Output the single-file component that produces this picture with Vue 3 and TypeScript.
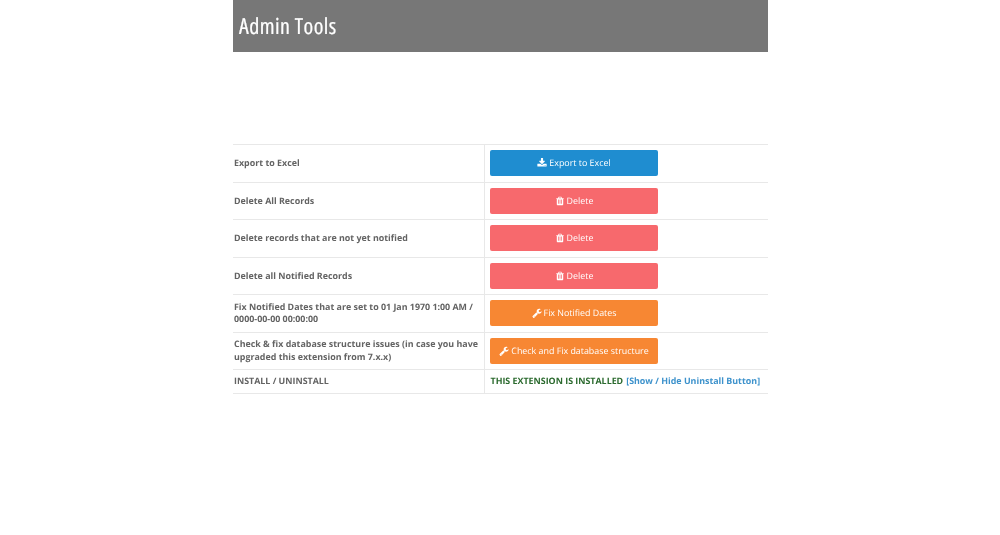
<script setup lang="ts">
type Row = { label: string; text: string; kind: string; icon: string }
const icons: Record<string, string> = {
  download: 'M1344 1344q0-26-19-45t-45-19-45 19-19 45 19 45 45 19 45-19 19-45zm256 0q0-26-19-45t-45-19-45 19-19 45 19 45 45 19 45-19 19-45zm128-224v320q0 40-28 68t-68 28h-1472q-40 0-68-28t-28-68v-320q0-40 28-68t68-28h465l135 136q58 56 136 56t136-56l136-136h464q40 0 68 28t28 68zm-325-569q17 41-14 70l-448 448q-18 19-45 19t-45-19l-448-448q-31-29-14-70 17-39 59-39h256v-448q0-26 19-45t45-19h256q26 0 45 19t19 45v448h256q42 0 59 39z',
  trash: 'M704 1376v-704q0-14-9-23t-23-9h-64q-14 0-23 9t-9 23v704q0 14 9 23t23 9h64q14 0 23-9t9-23zm256 0v-704q0-14-9-23t-23-9h-64q-14 0-23 9t-9 23v704q0 14 9 23t23 9h64q14 0 23-9t9-23zm256 0v-704q0-14-9-23t-23-9h-64q-14 0-23 9t-9 23v704q0 14 9 23t23 9h64q14 0 23-9t9-23zm-544-992h448l-48-117q-7-9-17-11h-317q-10 2-17 11zm928 32v64q0 14-9 23t-23 9h-96v948q0 83-47 143.5t-113 60.5h-832q-66 0-113-58.5t-47-141.5v-952h-96q-14 0-23-9t-9-23v-64q0-14 9-23t23-9h309l70-167q15-37 54-63t79-26h320q40 0 79 26t54 63l70 167h309q14 0 23 9t9 23z',
  wrench: 'M448 1472q0-26-19-45t-45-19-45 19-19 45 19 45 45 19 45-19 19-45zm644-420l-682 682q-37 37-90 37-52 0-91-37l-106-108q-38-36-38-90 0-53 38-91l681-681q39 98 114.5 173.5t173.5 114.5zm634-435q0 39-23 106-47 134-164.5 217.5t-258.5 83.5q-185 0-316.5-131.5t-131.5-316.5 131.5-316.5 316.5-131.5q58 0 121.5 16.5t107.5 46.5q16 11 16 28t-16 28l-293 169v224l193 107q5-3 79-48.5t135.5-81 70.5-35.5q15 0 23.5 10t8.5 25z',
}
const rows: Row[] = [
  { label: 'Export to Excel', text: 'Export to Excel', kind: 'blue', icon: 'download' },
  { label: 'Delete All Records', text: 'Delete', kind: 'red', icon: 'trash' },
  { label: 'Delete records that are not yet notified', text: 'Delete', kind: 'red', icon: 'trash' },
  { label: 'Delete all Notified Records', text: 'Delete', kind: 'red', icon: 'trash' },
  { label: 'Fix Notified Dates that are set to 01 Jan 1970 1:00 AM / 0000-00-00 00:00:00', text: 'Fix Notified Dates', kind: 'orange', icon: 'wrench' },
  { label: 'Check & fix database structure issues (in case you have upgraded this extension from 7.x.x)', text: 'Check and Fix database structure', kind: 'orange', icon: 'wrench' },
]
</script>

<template>
  <div class="panel">
    <header class="head"><h1>Admin Tools</h1></header>
    <div class="list">
      <div v-for="r in rows" :key="r.label" class="row">
        <div class="label">{{ r.label }}</div>
        <div class="action">
          <button class="btn" :class="r.kind">
            <svg viewBox="0 0 1792 1792" class="ico"><path :d="icons[r.icon]" /></svg>
            <span class="btn-text">{{ r.text }}</span>
          </button>
        </div>
      </div>
      <div class="row last">
        <div class="label">INSTALL / UNINSTALL</div>
        <div class="action status">
          <span class="ok">THIS EXTENSION IS INSTALLED</span>
          <a class="link">[Show / Hide Uninstall Button]</a>
        </div>
      </div>
    </div>
  </div>
</template>

<style>
html, body { background: #fff; }
</style>

<style scoped>
.panel {
  width: 535px;
  margin: 0 auto;
  box-sizing: border-box;
  font-family: "Open Sans", sans-serif;
  text-rendering: geometricPrecision;
  filter: blur(0.3px);
}
.head {
  height: 52px;
  background: #777;
  display: flex;
  align-items: center;
  padding-left: 6.5px;
}
.head h1 {
  margin: 0;
  color: #fff;
  font-size: 22px;
  font-weight: 400;
  font-stretch: 75%;
  letter-spacing: 0.45px;
  line-height: 24px;
  -webkit-text-stroke: 0.2px #fff;
}
.list {
  margin-top: 92px;
  border-top: 1px solid #e8e8e8;
}
.row {
  display: grid;
  grid-template-columns: 252px 1fr;
  height: 37.5px;
  box-sizing: border-box;
  border-bottom: 1px solid #e8e8e8;
}
.row.last { height: 24px; }
.label {
  display: flex;
  align-items: center;
  padding: 0 0 0 1.5px;
  font-size: 8.9px;
  font-weight: 700;
  line-height: 12.5px;
  color: #636363;
  border-right: 1px solid #e8e8e8;
}
.action {
  display: flex;
  align-items: center;
  padding-left: 5.5px;
}
.btn {
  width: 168px;
  height: 26px;
  border: 0;
  border-radius: 2px;
  display: flex;
  align-items: center;
  justify-content: center;
  gap: 2px;
  padding: 0;
  color: #fff;
  font-family: "Open Sans", sans-serif;
  font-size: 8.9px;
  text-rendering: geometricPrecision;
}
.btn-text { margin-bottom: 1px; }
.ico { width: 10px; height: 10px; fill: #fff; }
.blue { background: #1f8dd0; }
.red { background: #f7696d; }
.orange { background: #f78733; }
.status {
  font-size: 8.9px;
  font-weight: 700;
  gap: 3px;
  white-space: nowrap;
  padding-left: 6px;
  padding-bottom: 2px;
}
.ok { color: #2b6a2e; }
.link { color: #3d92cc; }
</style>
